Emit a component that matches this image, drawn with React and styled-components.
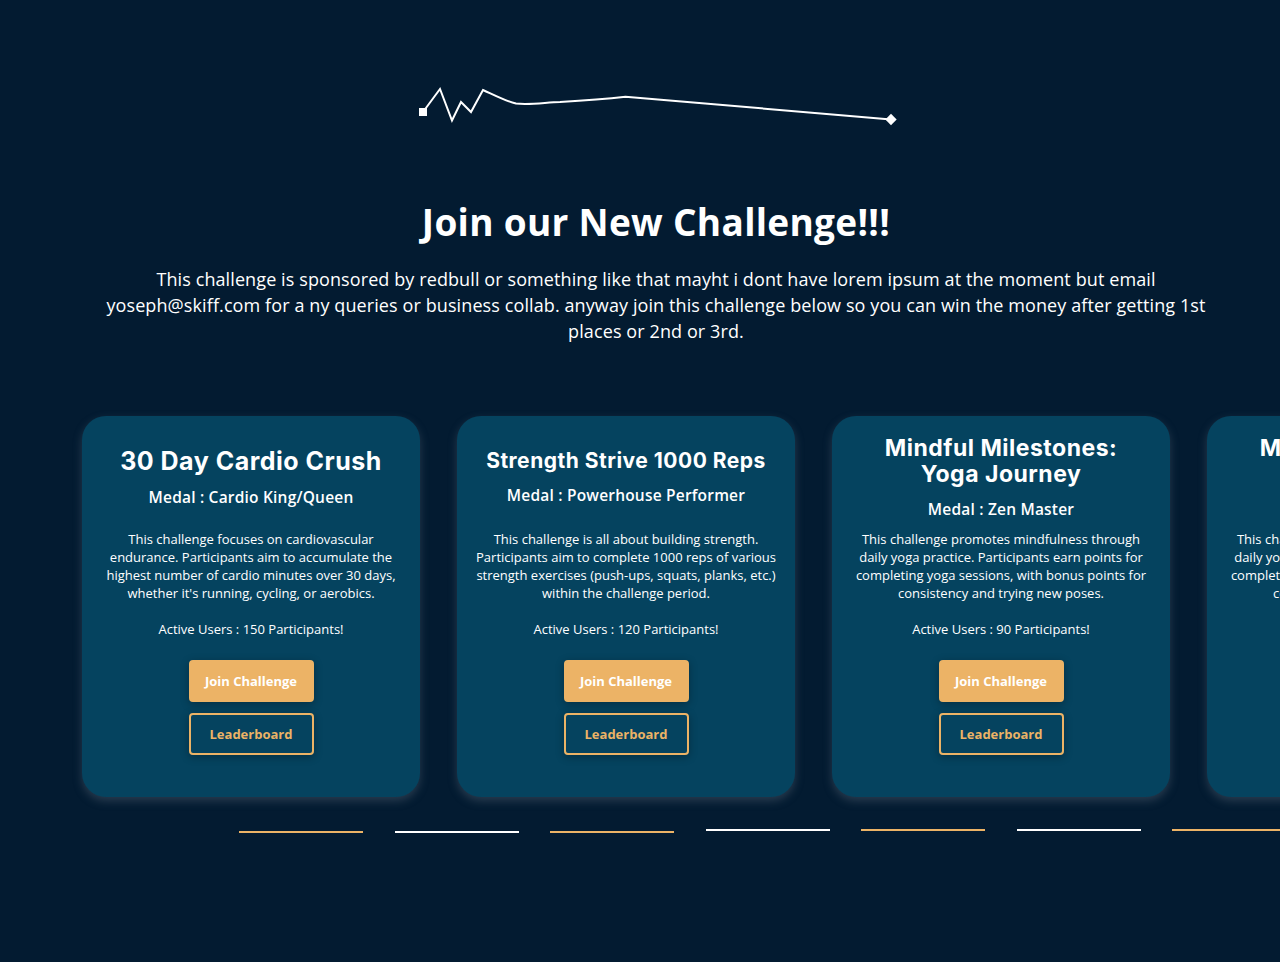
import React from 'react';
import styled, { createGlobalStyle } from 'styled-components';

const GlobalStyle = createGlobalStyle`
  html, body {
    margin: 0;
    padding: 0;
    background: #031b31;
    overflow-x: hidden;
  }
  body {
    font-family: "Open Sans", "Liberation Sans", sans-serif;
    color: #ffffff;
  }
`;

const Page = styled.div`
  min-height: 962px;
  background: #031b31;
  overflow: hidden;
`;

const Hero = styled.section`
  display: flex;
  flex-direction: column;
  align-items: center;
  padding: 80px 48px 0 80px;
`;

const Wave = styled.svg`
  display: block;
  margin-left: 8px;
`;

const Heading = styled.h1`
  margin: 68px 0 0;
  font-family: "Open Sans", sans-serif;
  font-weight: 700;
  font-size: 37px;
  line-height: 48px;
  letter-spacing: 0.3px;
  text-align: center;
`;

const Intro = styled.p`
  margin: 20px 0 0;
  max-width: 1110px;
  font-size: 18px;
  line-height: 26px;
  letter-spacing: 0.1px;
  text-align: center;
  font-weight: 400;
`;

const Track = styled.div`
  display: flex;
  gap: 37px;
  padding-left: 82px;
  margin-top: 72px;
`;

const Card = styled.article`
  flex: 0 0 338px;
  height: 381px;
  box-sizing: border-box;
  padding: 8px 18px 0;
  background: #05435f;
  border-radius: 24px;
  box-shadow: 0 4px 10px rgba(110, 120, 135, 0.35);
  display: flex;
  flex-direction: column;
  align-items: center;
  text-align: center;
`;

const CardHead = styled.div`
  height: 106px;
  display: flex;
  flex-direction: column;
  justify-content: center;
  align-items: center;
  gap: 12px;
`;

const Title = styled.h2`
  margin: 0;
  max-width: 290px;
  font-family: "Inter", sans-serif;
  font-weight: 700;
  font-size: ${p => p.$size}px;
  line-height: 1.15;
  letter-spacing: 0.5px;
`;

const Medal = styled.h3`
  margin: 0;
  font-size: 15.5px;
  font-weight: 600;
  line-height: 20px;
  letter-spacing: 0.2px;
`;

const Desc = styled.p`
  margin: 0;
  font-size: 13px;
  line-height: 18px;
`;

const Users = styled.p`
  margin: 18px 0 0;
  font-size: 13px;
  line-height: 18px;
`;

const Button = styled.button`
  width: 125px;
  height: 42px;
  box-sizing: border-box;
  border-radius: 4px;
  font-family: "Open Sans", sans-serif;
  font-weight: 700;
  font-size: 13px;
  cursor: pointer;
  box-shadow: 0 2px 8px rgba(0, 0, 0, 0.3);
  background: ${p => (p.$outline ? 'transparent' : '#ecb366')};
  color: ${p => (p.$outline ? '#ecb366' : '#ffffff')};
  border: 2px solid #ecb366;
  margin-top: ${p => p.$top}px;
`;

const Dashes = styled.div`
  display: flex;
  gap: 31.5px;
  padding-left: 239px;
  margin-top: 32px;
  align-items: flex-start;
`;

const Dash = styled.span`
  flex: 0 0 124px;
  height: 2px;
  background: ${p => (p.$gold ? '#ecb366' : '#ffffff')};
  margin-top: ${p => (p.$lift ? 0 : 2)}px;
`;

const challenges = [
  {
    title: '30 Day Cardio Crush',
    size: 25,
    medal: 'Medal : Cardio King/Queen',
    desc: "This challenge focuses on cardiovascular endurance. Participants aim to accumulate the highest number of cardio minutes over 30 days, whether it's running, cycling, or aerobics.",
    users: 150,
  },
  {
    title: 'Strength Strive 1000 Reps',
    size: 21,
    medal: 'Medal : Powerhouse Performer',
    desc: 'This challenge is all about building strength. Participants aim to complete 1000 reps of various strength exercises (push-ups, squats, planks, etc.) within the challenge period.',
    users: 120,
  },
  {
    title: 'Mindful Milestones: Yoga Journey',
    size: 23,
    medal: 'Medal : Zen Master',
    desc: 'This challenge promotes mindfulness through daily yoga practice. Participants earn points for completing yoga sessions, with bonus points for consistency and trying new poses.',
    users: 90,
  },
  {
    title: 'Mindful Milestones: Yoga Journey',
    size: 23,
    medal: 'Medal : Zen Master',
    desc: 'This challenge promotes mindfulness through daily yoga practice. Participants earn points for completing yoga sessions, with bonus points for consistency and trying new poses.',
    users: 90,
  },
];

const dashes = [
  { gold: true }, { gold: false }, { gold: true },
  { gold: false, lift: true }, { gold: true, lift: true },
  { gold: false, lift: true }, { gold: true, lift: true },
];

function App() {
  return (
    <Page>
      <GlobalStyle />
      <Hero>
        <Wave width="490" height="50" viewBox="415 80 490 50">
          <path
            d="M423 112 L440 89 L452 120.5 L461 102 L471 112 L483 90 C494 95 505 101 516 103.5 C530 105 545 102.5 560 102 C585 100.5 605 99 625.5 96.7 L891 119.5"
            fill="none"
            stroke="#fff"
            strokeWidth="2"
            strokeLinejoin="miter"
          />
          <rect x="419" y="108" width="8" height="8" fill="#fff" />
          <rect x="887" y="115.5" width="8" height="8" fill="#fff" transform="rotate(45 891 119.5)" />
        </Wave>
        <Heading>Join our New Challenge!!!</Heading>
        <Intro>
          This challenge is sponsored by redbull or something like that mayht i dont have lorem ipsum at the moment but email yoseph@skiff.com for a ny queries or business collab. anyway join this challenge below so you can win the money after getting 1st places or 2nd or 3rd.
        </Intro>
      </Hero>

      <Track>
        {challenges.map((c, i) => (
          <Card key={i}>
            <CardHead>
              <Title $size={c.size}>{c.title}</Title>
              <Medal>{c.medal}</Medal>
            </CardHead>
            <Desc>{c.desc}</Desc>
            <Users>Active Users : {c.users} Participants!</Users>
            <Button $top={22}>Join Challenge</Button>
            <Button $outline $top={11}>Leaderboard</Button>
          </Card>
        ))}
      </Track>

      <Dashes>
        {dashes.map((d, i) => (
          <Dash key={i} $gold={d.gold} $lift={d.lift} />
        ))}
      </Dashes>
    </Page>
  );
}

export default App;
